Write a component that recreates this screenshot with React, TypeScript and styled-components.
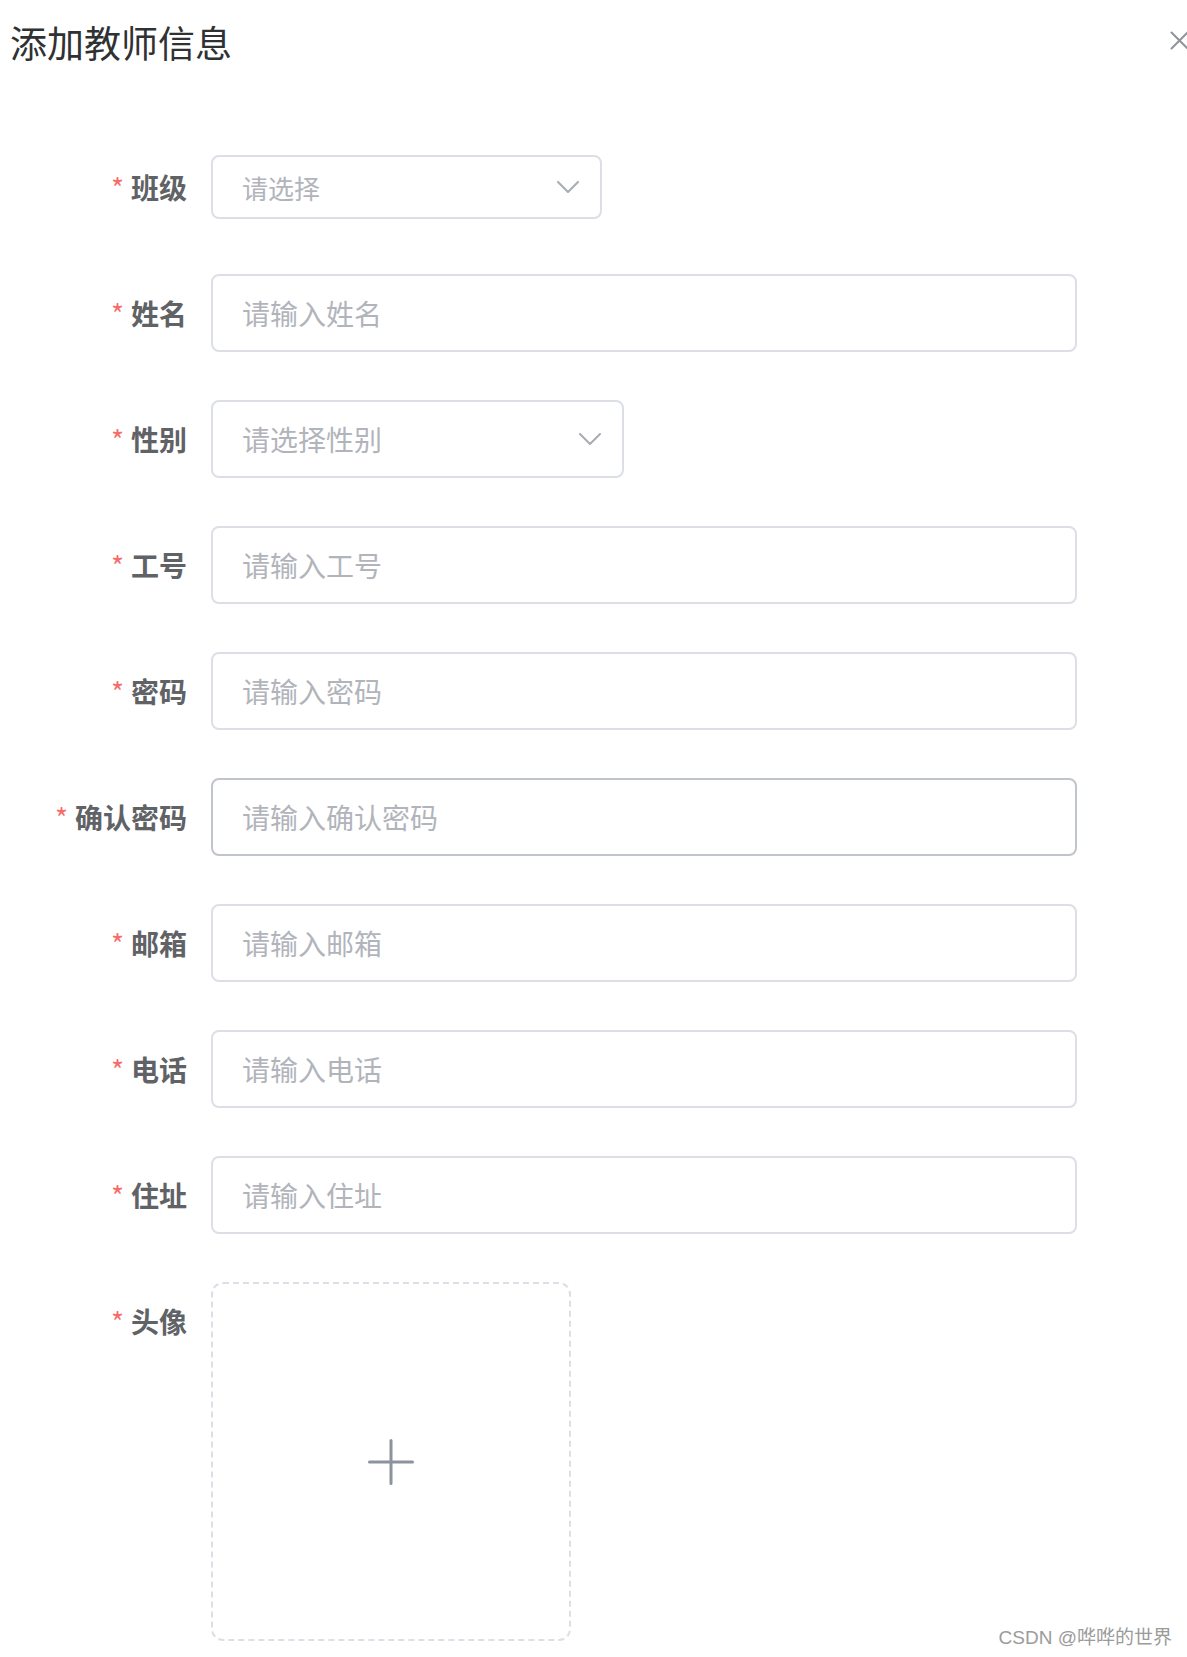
import React from 'react';
import styled, { createGlobalStyle } from 'styled-components';

const GlobalStyle = createGlobalStyle`
  html, body {
    margin: 0;
    padding: 0;
    background: #fff;
  }
  body {
    font-family: "Noto Sans CJK SC", "Noto Sans", sans-serif;
  }
  * {
    box-sizing: border-box;
  }
`;

const Dialog = styled.div`
  position: relative;
  width: 1187px;
  height: 1657px;
  overflow: hidden;
  background: #fff;
`;

const Header = styled.header`
  display: flex;
  justify-content: space-between;
  align-items: flex-start;
  height: 148px;
  padding: 18px 0 0 10px;
`;

const Title = styled.h2`
  margin: 0;
  font-size: 37px;
  line-height: 48px;
  font-weight: 400;
  color: #303133;
`;

const CloseButton = styled.button`
  display: flex;
  width: 19px;
  height: 19px;
  margin-top: 13px;
  margin-right: -2px;
  padding: 0;
  border: none;
  background: none;
  cursor: pointer;
`;

const Form = styled.form`
  display: flex;
  flex-direction: column;
  gap: 48px;
`;

const FormItem = styled.div`
  display: flex;
  align-items: flex-start;
`;

const Label = styled.label`
  flex-shrink: 0;
  width: 211px;
  padding-right: 24px;
  text-align: right;
  font-size: 28px;
  line-height: 78px;
  font-weight: 700;
  color: #606266;
`;

const Required = styled.span`
  margin-right: 7px;
  font-weight: 400;
  color: #f56c6c;
`;

const Content = styled.div`
  display: flex;
  align-items: center;
  min-height: 78px;
`;

const TextInput = styled.input<{ $hover?: boolean }>`
  width: 866px;
  height: 78px;
  padding: 0 29px;
  border: 2px solid ${p => (p.$hover ? '#c0c4cc' : '#dcdfe6')};
  border-radius: 8px;
  outline: none;
  font-family: inherit;
  font-size: 28px;
  color: #606266;
  background: #fff;

  &::placeholder {
    color: #b1b4bb;
  }
`;

const SelectBox = styled.div<{ $width: number; $small?: boolean }>`
  display: flex;
  align-items: center;
  justify-content: space-between;
  width: ${p => p.$width}px;
  height: ${p => (p.$small ? 64 : 78)}px;
  padding: 0 21px 0 29px;
  border: 2px solid #dcdfe6;
  border-radius: 8px;
  font-size: ${p => (p.$small ? 26 : 28)}px;
  color: #b1b4bb;
  cursor: pointer;
`;

const Uploader = styled.div`
  display: flex;
  align-items: center;
  justify-content: center;
  width: 360px;
  height: 359px;
  border: 2px dashed #dcdfe6;
  border-radius: 12px;
  cursor: pointer;
`;

const Watermark = styled.div`
  position: absolute;
  top: 1628px;
  right: 15px;
  font-family: "Liberation Sans", "Noto Sans CJK SC", sans-serif;
  font-size: 19px;
  line-height: 20px;
  color: #9b9b9b;
  text-shadow: 0 0 1px #fff;
`;

const Chevron = () => (
  <svg width="22" height="12" viewBox="0 0 22 12" fill="none">
    <polyline points="1,1 11,11 21,1" stroke="#a8abb2" strokeWidth="2" strokeLinejoin="round" strokeLinecap="round" />
  </svg>
);

const CloseIcon = () => (
  <svg width="19" height="19" viewBox="0 0 19 19" fill="none">
    <path d="M1.5 1.5 L17.5 17.5 M17.5 1.5 L1.5 17.5" stroke="#909399" strokeWidth="2" strokeLinecap="round" />
  </svg>
);

const PlusIcon = () => (
  <svg width="46" height="46" viewBox="0 0 46 46" fill="none">
    <path d="M23 1.5 V44.5 M1.5 23 H44.5" stroke="#8c939d" strokeWidth="3" strokeLinecap="round" />
  </svg>
);

type Field =
  | { label: string; kind: 'input'; placeholder: string; hover?: boolean }
  | { label: string; kind: 'select'; placeholder: string; width: number; small?: boolean }
  | { label: string; kind: 'upload' };

const fields: Field[] = [
  { label: '班级', kind: 'select', placeholder: '请选择', width: 391, small: true },
  { label: '姓名', kind: 'input', placeholder: '请输入姓名' },
  { label: '性别', kind: 'select', placeholder: '请选择性别', width: 413 },
  { label: '工号', kind: 'input', placeholder: '请输入工号' },
  { label: '密码', kind: 'input', placeholder: '请输入密码' },
  { label: '确认密码', kind: 'input', placeholder: '请输入确认密码', hover: true },
  { label: '邮箱', kind: 'input', placeholder: '请输入邮箱' },
  { label: '电话', kind: 'input', placeholder: '请输入电话' },
  { label: '住址', kind: 'input', placeholder: '请输入住址' },
  { label: '头像', kind: 'upload' },
];

const renderControl = (field: Field) => {
  switch (field.kind) {
    case 'input':
      return <TextInput type={field.label.includes('密码') ? 'password' : 'text'} placeholder={field.placeholder} $hover={field.hover} />;
    case 'select':
      return (
        <SelectBox $width={field.width} $small={field.small}>
          <span>{field.placeholder}</span>
          <Chevron />
        </SelectBox>
      );
    case 'upload':
      return (
        <Uploader>
          <PlusIcon />
        </Uploader>
      );
  }
};

const App: React.FC = () => (
  <Dialog>
    <GlobalStyle />
    <Header>
      <Title>添加教师信息</Title>
      <CloseButton type="button" aria-label="关闭">
        <CloseIcon />
      </CloseButton>
    </Header>
    <Form onSubmit={e => e.preventDefault()}>
      {fields.map(field => (
        <FormItem key={field.label}>
          <Label>
            <Required>*</Required>
            {field.label}
          </Label>
          <Content>{renderControl(field)}</Content>
        </FormItem>
      ))}
    </Form>
    <Watermark>CSDN @哗哗的世界</Watermark>
  </Dialog>
);

export default App;
